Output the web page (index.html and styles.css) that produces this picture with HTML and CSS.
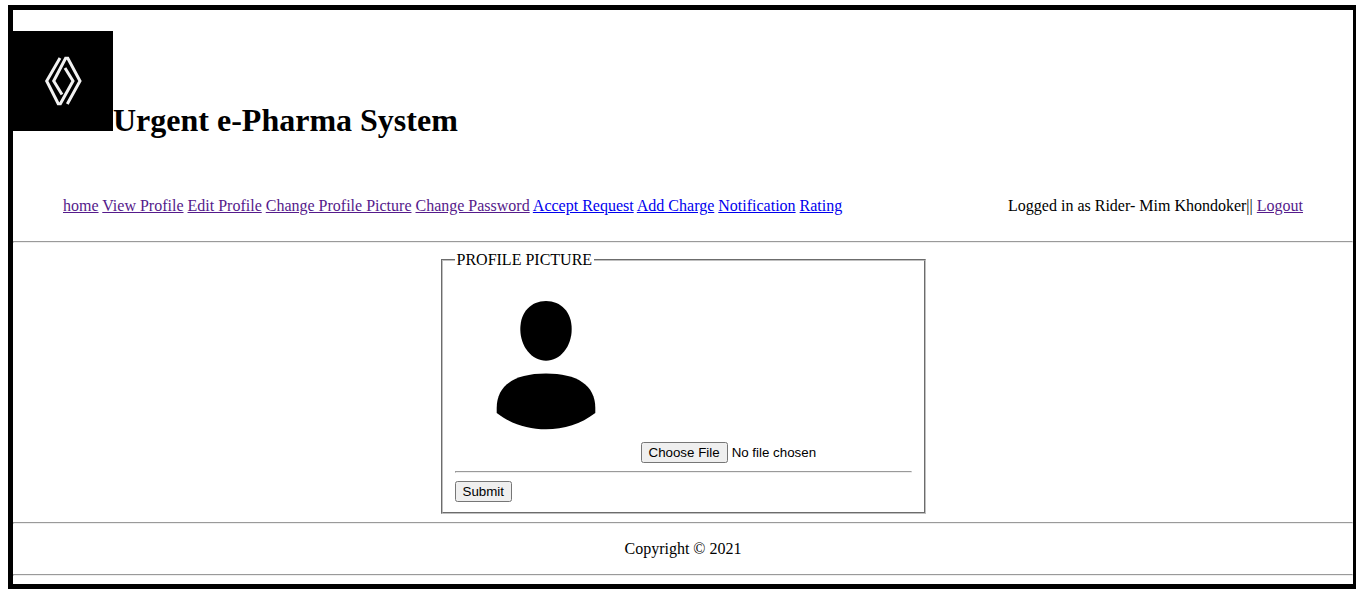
FILE: index.html
```html
<!DOCTYPE html>
<html lang="en">
<head>
  <meta charset="utf-8">
  <title>Urgent e-Pharma System</title>
  <link rel="stylesheet" href="styles.css">
</head>
<body>
  <div class="frame">
    <header>
      <h1 class="brand"><svg class="logo" viewBox="0 0 100 100" role="img" aria-label="Logo"><rect width="100" height="100"/><path d="M47 27 33.700 50 45.200 72.700H47.400L60 50 52 37M54.300 73 67 50 54.800 27.300H52.600L40.700 50 49 63.500"/></svg>Urgent e-Pharma System</h1>
      <div class="bar">
        <nav>
          <a class="visited" href="#home">home</a>
          <a class="visited" href="#view">View Profile</a>
          <a class="visited" href="#edit">Edit Profile</a>
          <a class="visited" href="#picture">Change Profile Picture</a>
          <a class="visited" href="#password">Change Password</a>
          <a href="#accept">Accept Request</a>
          <a href="#charge">Add Charge</a>
          <a href="#notification">Notification</a>
          <a href="#rating">Rating</a>
        </nav>
        <div>Logged in as Rider- Mim Khondoker|| <a class="visited" href="#logout">Logout</a></div>
      </div>
    </header>
    <hr>
    <main>
      <form>
        <fieldset class="panel">
          <legend>PROFILE PICTURE</legend>
          <svg class="avatar" viewBox="0 0 182 182" role="img" aria-label="Profile picture"><path d="M91 26C106 26 116.700 37 116.700 54C116.700 72 105 85.700 91 85.700C77 85.700 65.300 72 65.300 54C65.300 37 76 26 91 26Z"/><path d="M41.700 138V133C41.700 110 60 98.500 91 98.500C122 98.500 140.300 110 140.300 133V138C126 149 109 154.300 91 154.300C73 154.300 56 149 41.700 138Z"/></svg>
          <input type="file" aria-label="Profile picture file">
          <hr>
          <input type="submit" value="Submit">
        </fieldset>
      </form>
    </main>
    <hr>
    <footer>
      <p class="copyright">Copyright © 2021</p>
    </footer>
    <hr>
  </div>
</body>
</html>
```

FILE: styles.css
```css
body {
  margin: 5px 0 8px 8px;
  overflow-x: hidden;
  background: #fff;
  color: #000;
  font: 16px "Liberation Serif", "Times New Roman", serif;
}

.frame {
  display: flow-root;
  margin-right: -2px;
  border: 5px solid #000;
}

.brand {
  margin: 21px 0;
  font-size: 32px;
}

.logo {
  width: 100px;
  height: 100px;
}

.logo path {
  fill: none;
  stroke: #f2f2f2;
  stroke-width: 3;
}

.bar {
  display: flex;
  justify-content: space-between;
  padding: 37px 50px 18px;
}

a {
  color: #00e;
}

.visited {
  color: #551a8b;
}

hr {
  margin: 8px 0;
}

.panel {
  box-sizing: border-box;
  max-width: 485px;
  margin: 0 auto;
  border: 2px groove #c0c0c0;
}

.avatar {
  width: 182px;
  height: 182px;
}

input {
  font-family: "Liberation Sans", Arial, sans-serif;
}

.copyright {
  margin: 16px 0;
  text-align: center;
}
```
